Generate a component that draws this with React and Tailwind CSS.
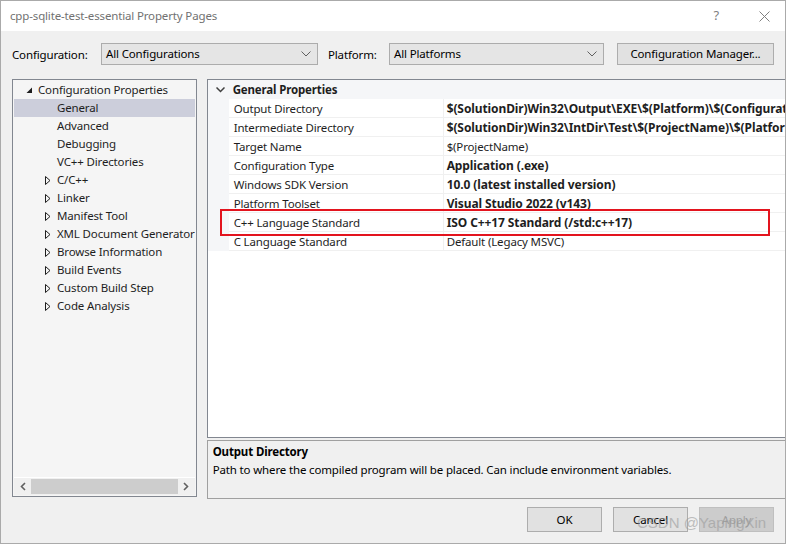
import React from 'react';

const font = { fontFamily: '"Noto Sans", "Liberation Sans", sans-serif' };

const treeItems = [
  { label: 'Configuration Properties', level: 0, expanded: true },
  { label: 'General', level: 1, selected: true },
  { label: 'Advanced', level: 1 },
  { label: 'Debugging', level: 1 },
  { label: 'VC++ Directories', level: 1 },
  { label: 'C/C++', level: 1, collapsed: true },
  { label: 'Linker', level: 1, collapsed: true },
  { label: 'Manifest Tool', level: 1, collapsed: true },
  { label: 'XML Document Generator', level: 1, collapsed: true },
  { label: 'Browse Information', level: 1, collapsed: true },
  { label: 'Build Events', level: 1, collapsed: true },
  { label: 'Custom Build Step', level: 1, collapsed: true },
  { label: 'Code Analysis', level: 1, collapsed: true },
];

const props = [
  { name: 'Output Directory', value: '$(SolutionDir)Win32\\Output\\EXE\\$(Platform)\\$(Configuration)\\', bold: true },
  { name: 'Intermediate Directory', value: '$(SolutionDir)Win32\\IntDir\\Test\\$(ProjectName)\\$(Platform)\\$(Configuration)\\', bold: true },
  { name: 'Target Name', value: '$(ProjectName)' },
  { name: 'Configuration Type', value: 'Application (.exe)', bold: true },
  { name: 'Windows SDK Version', value: '10.0 (latest installed version)', bold: true },
  { name: 'Platform Toolset', value: 'Visual Studio 2022 (v143)', bold: true },
  { name: 'C++ Language Standard', value: 'ISO C++17 Standard (/std:c++17)', bold: true },
  { name: 'C Language Standard', value: 'Default (Legacy MSVC)' },
];

const ComboChevron = () => (
  <svg width="10" height="6" viewBox="0 0 10 6" className="shrink-0">
    <path d="M0.5 0.5 L5 5 L9.5 0.5" fill="none" stroke="#606060" strokeWidth="1" />
  </svg>
);

const Combo = ({ text, width }) => (
  <div className={`${width} h-[22px] bg-[#e5e5e5] border border-[#acacac] flex items-center pl-[4px] pr-[6px]`}>
    <span className="flex-1 text-[11.5px] text-black">{text}</span>
    <ComboChevron />
  </div>
);

const Button = ({ children, disabled }) => (
  <div
    className={`w-[75px] h-[25px] flex items-center justify-center text-[11.5px] border ${
      disabled ? 'bg-[#cccccc] border-[#bfbfbf] text-[#a0a0a0]' : 'bg-[#e1e1e1] border-[#adadad] text-black'
    }`}
  >
    {children}
  </div>
);

const TreeRow = ({ item }) => (
  <div className={`h-[18px] flex items-center text-[11.5px] text-[#1e1e1e] ${item.selected ? 'bg-[#cccedb]' : ''}`}>
    {item.level === 0 ? (
      <>
        <div className="w-[10px] ml-[10px] flex justify-center">
          <svg width="7" height="7" viewBox="0 0 7 7">
            <path d="M6 0.5 L6 6 L0.5 6 Z" fill="#1e1e1e" />
          </svg>
        </div>
        <span className="ml-[4px] whitespace-nowrap">{item.label}</span>
      </>
    ) : (
      <>
        <div className="w-[10px] ml-[29px] flex justify-center">
          {item.collapsed && (
            <svg width="6" height="9" viewBox="0 0 6 9">
              <path d="M0.5 0.5 L5 4.5 L0.5 8.5 Z" fill="none" stroke="#1e1e1e" strokeWidth="1" />
            </svg>
          )}
        </div>
        <span className="ml-[4px] whitespace-nowrap">{item.label}</span>
      </>
    )}
  </div>
);

export default function App() {
  return (
    <div className="w-[786px] h-[544px] bg-[#f0f0f0] border border-[#aaaaaa] flex flex-col relative overflow-hidden tracking-[-0.15px]" style={font}>
      {/* title bar */}
      <div className="h-[30px] bg-white flex items-center pl-[9px] pr-[15px]">
        <span className="flex-1 text-[11.5px] text-[#717171]">cpp-sqlite-test-essential Property Pages</span>
        <span className="text-[13px] text-[#808080] mr-[40px]">?</span>
        <svg width="11" height="11" viewBox="0 0 11 11">
          <path d="M0.5 0.5 L10.5 10.5 M10.5 0.5 L0.5 10.5" stroke="#808080" strokeWidth="1" />
        </svg>
      </div>

      <div className="flex-1 flex flex-col pl-[11px] pr-[10px]">
        {/* configuration row */}
        <div className="mt-[12px] h-[22px] flex items-center">
          <span className="w-[89px] text-[11.5px] text-black pt-[1px]">Configuration:</span>
          <Combo text="All Configurations" width="w-[217px]" />
          <span className="ml-[10px] w-[61px] text-[11.5px] text-black pt-[1px]">Platform:</span>
          <Combo text="All Platforms" width="w-[215px]" />
          <div className="ml-[13px] w-[157px] h-[22px] bg-[#e1e1e1] border border-[#adadad] flex items-center justify-center text-[11.5px] text-black">
            Configuration Manager...
          </div>
        </div>

        {/* main area */}
        <div className="mt-[14px] flex gap-[10px] h-[420px]">
          {/* tree */}
          <div className="w-[186px] h-[418px] border border-[#828790] bg-[#f5f5f5] flex flex-col p-[1px]">
            <div className="flex-1 overflow-hidden">
              {treeItems.map((it) => (
                <TreeRow key={it.label} item={it} />
              ))}
            </div>
            <div className="h-[1px] bg-white" />
            <div className="h-[17px] flex items-center bg-[#f0f0f0]">
              <div className="w-[17px] flex justify-center">
                <svg width="6" height="9" viewBox="0 0 6 9">
                  <path d="M5 1 L1.5 4.5 L5 8" fill="none" stroke="#606060" strokeWidth="1.6" />
                </svg>
              </div>
              <div className="flex-1 h-[15px] bg-[#cdcdcd]" />
              <div className="w-[17px] flex justify-center">
                <svg width="6" height="9" viewBox="0 0 6 9">
                  <path d="M1 1 L4.5 4.5 L1 8" fill="none" stroke="#606060" strokeWidth="1.6" />
                </svg>
              </div>
            </div>
          </div>

          {/* property grid + description */}
          <div className="flex-1 flex flex-col">
            <div className="h-[359px] border border-[#828790] bg-white flex flex-col overflow-hidden relative">
              <div className="h-[19px] bg-[#f5f6f8] flex items-center text-[11.5px] font-bold text-[#1e1e1e]">
                <div className="w-[25px] flex justify-center">
                  <svg width="9" height="6" viewBox="0 0 9 6">
                    <path d="M0.5 0.5 L4.5 4.5 L8.5 0.5" fill="none" stroke="#404040" strokeWidth="1.5" />
                  </svg>
                </div>
                <span className="whitespace-nowrap">General Properties</span>
              </div>
              {props.map((p) => (
                <div key={p.name} className="h-[19px] flex text-[11.5px] text-[#1e1e1e]">
                  <div className="w-[21px] bg-[#f5f6f8] shrink-0" />
                  <div className="w-[215px] shrink-0 border-b border-r border-[#f0f0f0] pl-[5px] pt-[1px] flex items-center whitespace-nowrap">
                    {p.name}
                  </div>
                  <div
                    className={`flex-1 border-b border-[#f0f0f0] pl-[3px] pt-[1px] flex items-center whitespace-nowrap overflow-hidden ${
                      p.bold ? 'font-bold text-[12px] tracking-[-0.1px]' : ''
                    }`}
                  >
                    {p.value}
                  </div>
                  <div className="w-[2px] bg-white shrink-0" />
                </div>
              ))}
            </div>
            <div className="mt-[2px] h-[59px] border border-[#a0a0a0] bg-[#f0f0f0] px-[5px] pt-[2px] text-[11.5px] text-black">
              <div className="font-bold leading-[18px]">Output Directory</div>
              <div className="leading-[18px]">Path to where the compiled program will be placed. Can include environment variables.</div>
            </div>
          </div>
        </div>

        {/* buttons */}
        <div className="mt-[8px] flex justify-end gap-[11px] pr-[1px]">
          <Button>OK</Button>
          <Button>Cancel</Button>
          <Button disabled>Apply</Button>
        </div>
      </div>

      {/* red highlight annotation */}
      <div className="absolute left-[219px] top-[208px] w-[550px] h-[27px] border-2 border-[#e3141e]" />

      {/* watermark */}
      <div className="absolute left-[636px] top-[511px] text-[15px] text-[#9a9a9a] opacity-60 whitespace-nowrap tracking-normal" style={{ fontFamily: '"Liberation Sans", sans-serif' }}>
        CSDN @YapingXin
      </div>
    </div>
  );
}
